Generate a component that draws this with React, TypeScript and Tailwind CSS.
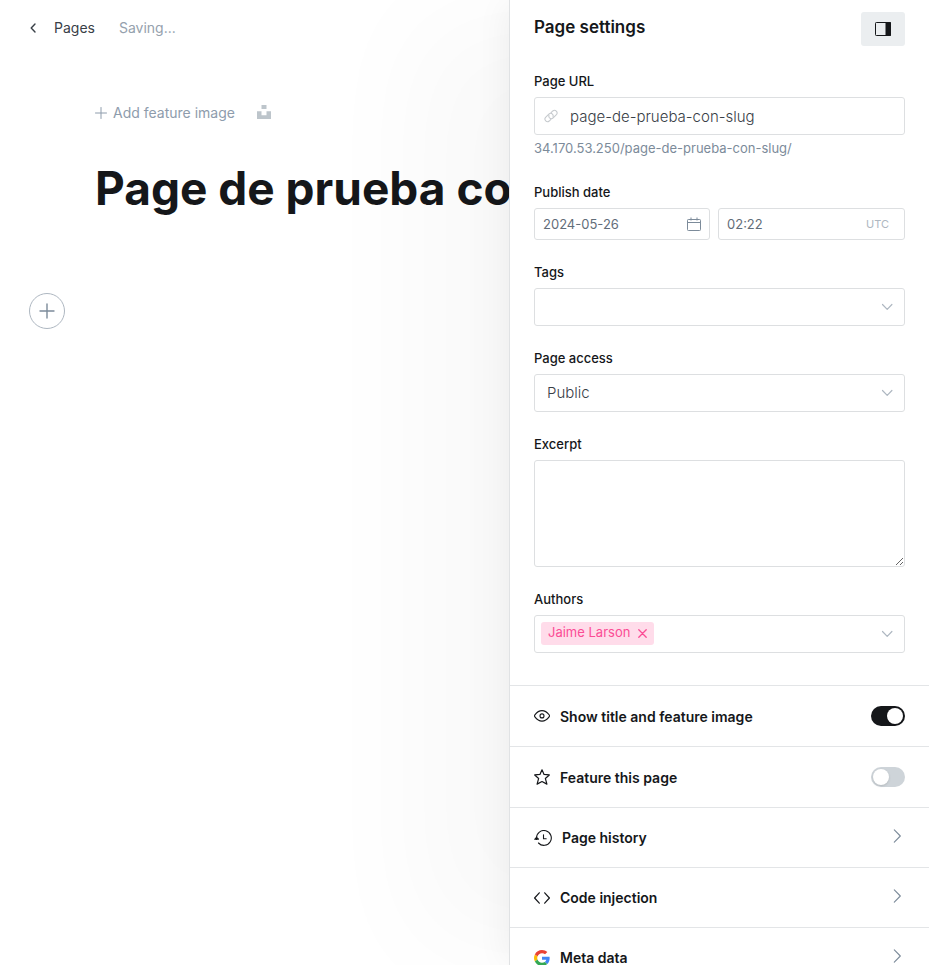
import { useState, type ReactNode } from "react";

const stroke = {
  fill: "none",
  stroke: "currentColor",
  strokeLinecap: "round",
  strokeLinejoin: "round",
} as const;

function ChevronDown() {
  return (
    <svg {...stroke} viewBox="0 0 12 8" className="pointer-events-none h-2 w-3 shrink-0 text-[#aeb7c1]" strokeWidth="1.2" aria-hidden="true">
      <path d="m1.500 1.500 4.700 4.900 4.700-4.900" />
    </svg>
  );
}

function ChevronRight() {
  return (
    <svg {...stroke} viewBox="0 0 8 14" className="mr-1 mb-1 h-3.5 w-2 text-[#7c8b9a]" strokeWidth="1.1" aria-hidden="true">
      <path d="M1.300.8 7.300 7l-6 6.200" />
    </svg>
  );
}

function LinkIcon() {
  return (
    <svg {...stroke} viewBox="0 0 24 24" className="size-3.5 shrink-0 text-[#c5c9cd]" strokeWidth="1.8" aria-hidden="true">
      <path d="M8.600 10.400a4.600 4.600 0 0 0 .9 4.800 4.400 4.400 0 0 0 6.200 0l5.600-5.600a4.400 4.400 0 0 0-6.200-6.200l-2.900 2.900" />
      <path d="M15.400 13.600a4.600 4.600 0 0 0-.9-4.800 4.400 4.400 0 0 0-6.200 0l-5.600 5.600a4.400 4.400 0 0 0 6.200 6.200l2.900-2.900" />
    </svg>
  );
}

function CalendarIcon() {
  return (
    <svg viewBox="0 0 14 14" className="size-3.5 shrink-0" fill="none" stroke="#7c8b9a" aria-hidden="true">
      <rect x=".5" y="2.5" width="13" height="11" rx=".8" />
      <path d="M.5 5.5h13M4 .5v3M10 .5v3" />
    </svg>
  );
}

function EyeIcon() {
  return (
    <svg {...stroke} viewBox="0 0 16 16" className="size-4" strokeWidth="1.1" aria-hidden="true">
      <path d="M8 2.600c-3 0-5.600 2.200-7.100 4.200a1.800 1.800 0 0 0 0 2.100C2.400 10.900 5 13.100 8 13.100s5.600-2.200 7.100-4.200a1.800 1.800 0 0 0 0-2.100C13.600 4.800 11 2.600 8 2.600Z" />
      <circle cx="8" cy="7.900" r="2" />
    </svg>
  );
}

function StarIcon() {
  return (
    <svg {...stroke} viewBox="0 0 16 16" className="size-4" strokeWidth="1.2" aria-hidden="true">
      <path d="m8 .8 2.050 4.650 5.250.5-3.950 3.500 1.550 5.650L8 12.500 3.100 15.100l1.550-5.650L.7 5.950l5.250-.5Z" />
    </svg>
  );
}

function HistoryIcon() {
  return (
    <svg {...stroke} viewBox="0 0 18 16" className="h-4 w-4.5" strokeWidth="1.1" aria-hidden="true">
      <path d="M2.500 9.500V8a7.400 7.400 0 1 1 2 5M9.500 4.700v4.100h2.700" />
      <path d="M.7 9.300 2.500 7.300l2 1.800Z" fill="currentColor" />
    </svg>
  );
}

function CodeIcon() {
  return (
    <svg {...stroke} viewBox="0 0 16 16" className="size-4" strokeWidth="1.2" aria-hidden="true">
      <path d="M5.300 2.800.600 8l4.700 5.200M10.700 2.800 15.400 8l-4.700 5.200" />
    </svg>
  );
}

function GoogleIcon() {
  return (
    <svg viewBox="0 0 48 48" className="size-4" aria-hidden="true">
      <path fill="#EA4335" d="M24 9.500c3.540 0 6.710 1.220 9.210 3.600l6.850-6.850C35.900 2.380 30.470 0 24 0 14.620 0 6.510 5.380 2.560 13.220l7.980 6.190C12.430 13.720 17.740 9.500 24 9.500z" />
      <path fill="#4285F4" d="M46.980 24.550c0-1.570-.15-3.090-.38-4.550H24v9.020h12.940c-.58 2.960-2.260 5.480-4.780 7.180l7.730 6c4.510-4.180 7.090-10.360 7.090-17.650z" />
      <path fill="#FBBC05" d="M10.530 28.590A14.500 14.500 0 0 1 9.770 24c0-1.600.27-3.140.76-4.590l-7.980-6.190A23.900 23.900 0 0 0 0 24c0 3.870.92 7.530 2.560 10.780z" />
      <path fill="#34A853" d="M24 48c6.480 0 11.930-2.130 15.890-5.810l-7.730-6c-2.150 1.450-4.920 2.300-8.160 2.300-6.260 0-11.570-4.220-13.470-9.910l-7.980 6.190C6.510 42.620 14.620 48 24 48z" />
    </svg>
  );
}

function Label({ htmlFor, children }: { htmlFor: string; children: ReactNode }) {
  return (
    <label htmlFor={htmlFor} className="mb-2 block text-[13px] leading-4 font-medium text-[#15171a]">
      {children}
    </label>
  );
}

const box = "flex items-center rounded-[3px] border border-[#dddfe1] bg-white";

function ToggleRow({ id, icon, label, initial }: { id: string; icon: ReactNode; label: string; initial: boolean }) {
  const [on, setOn] = useState(initial);
  return (
    <div className="flex h-[61px] items-center border-t border-[#e3e5e7] px-6">
      {icon}
      <label htmlFor={id} className="ml-2.5 flex-1 pt-0.5 text-sm leading-5 font-semibold">
        {label}
      </label>
      <input
        id={id}
        type="checkbox"
        checked={on}
        onChange={(e) => setOn(e.target.checked)}
        className="h-5 w-[34px] cursor-pointer appearance-none rounded-full bg-[#ced4d9] p-0.5 before:block before:size-4 before:rounded-full before:bg-white before:shadow-sm checked:bg-[#15171a] checked:before:ml-3.5"
      />
    </div>
  );
}

function LinkRow({ icon, label }: { icon: ReactNode; label: string }) {
  return (
    <button type="button" className="flex h-[60px] w-full items-center border-t border-[#e3e5e7] px-6 text-left">
      {icon}
      <span className="ml-2.5 flex-1 text-sm leading-5 font-semibold">{label}</span>
      <ChevronRight />
    </button>
  );
}

function Editor() {
  return (
    <main className="min-w-0 flex-1 overflow-hidden">
      <header className="flex h-14 items-center pl-[30px] text-sm">
        <a href="#pages" className="flex items-center gap-[17px] text-[#394047]">
          <svg {...stroke} viewBox="0 0 7 10" className="h-2.5 w-[7px]" strokeWidth="1.4" aria-hidden="true">
            <path d="M5 1 1.200 5 5 9" />
          </svg>
          Pages
        </a>
        <span className="ml-6 text-[#95a1ad]">Saving...</span>
      </header>
      <div className="mt-[47px] flex h-5 items-center pl-[95px]">
        <button type="button" className="flex items-center gap-1.5 text-sm text-[#8e9cac]">
          <svg {...stroke} viewBox="0 0 12 12" className="size-3" aria-hidden="true">
            <path d="M6 .5v11M.5 6h11" />
          </svg>
          Add feature image
        </button>
        <button type="button" aria-label="Choose from Unsplash" className="ml-[22px] pb-0.5 text-[#bdc5cb]">
          <svg viewBox="0 0 14 14" className="size-3.5" fill="currentColor" aria-hidden="true">
            <path d="M4.500 0h5v4h-5zM0 6.200h4.500v4h5v-4H14V14H0z" />
          </svg>
        </button>
      </div>
      <h1 className="mt-9 pl-[95px] text-[46px] leading-[58px] font-bold whitespace-nowrap text-[#15171a]">
        Page de prueba con
      </h1>
      <button
        type="button"
        aria-label="Add a card"
        className="mt-[76px] ml-[29px] flex size-9 items-center justify-center rounded-full border border-[#aeb7c1] text-[#7c8b9a]"
      >
        <svg {...stroke} viewBox="0 0 16 16" className="size-4" strokeWidth="1.400" aria-hidden="true">
          <path d="M8 1v14M1 8h14" />
        </svg>
      </button>
    </main>
  );
}

function SettingsPanel() {
  return (
    <aside className="relative w-[420px] shrink-0 overflow-y-auto border-l border-[#e0e2e4] bg-white shadow-[-8px_0_30px_-4px_rgba(0,0,0,0.05),-115px_0_110px_-20px_rgba(0,0,0,0.026)] [scrollbar-width:none]">
      <div className="px-6 pt-3 pb-8">
        <div className="flex h-[34px] items-center justify-between">
          <h2 className="pb-1 text-[17px] leading-6 font-semibold">Page settings</h2>
          <button type="button" aria-label="Toggle settings" className="flex h-[34px] w-11 items-center justify-center rounded-[3px] bg-[#ebeef0]">
            <svg viewBox="0 0 16 14" className="h-3.5 w-4" aria-hidden="true">
              <rect x=".5" y=".5" width="15" height="13" rx=".8" fill="none" stroke="#15171a" />
              <path d="M10.500 0h4.700a.8.8 0 0 1 .8.8v12.400a.8.8 0 0 1-.8.8h-4.700z" fill="#15171a" />
            </svg>
          </button>
        </div>

        <form className="mt-[27px] flex flex-col gap-6" onSubmit={(e) => e.preventDefault()}>
          <div>
            <Label htmlFor="url">Page URL</Label>
            <div className={`${box} h-[38px] gap-3 px-[9px]`}>
              <LinkIcon />
              <input id="url" defaultValue="page-de-prueba-con-slug" className="min-w-0 flex-1 pt-0.5 text-[15px] font-light text-[#394047] outline-none" />
            </div>
            <p className="mt-1 mb-0.5 text-[13px] leading-[19px] text-[#7c8b9a]">34.170.53.250/page-de-prueba-con-slug/</p>
          </div>

          <div>
            <Label htmlFor="date">Publish date</Label>
            <div className="flex gap-2">
              <div className={`${box} h-8 w-44 px-2`}>
                <input id="date" defaultValue="2024-05-26" className="min-w-0 flex-1 pt-px text-[13px] text-[#626d79] outline-none" />
                <CalendarIcon />
              </div>
              <div className={`${box} h-8 min-w-0 flex-1 pr-[15px] pl-2`}>
                <input aria-label="Publish time" defaultValue="02:22" className="min-w-0 flex-1 pt-px text-[13px] text-[#626d79] outline-none" />
                <span className="text-[11px] text-[#aeb7c1]">UTC</span>
              </div>
            </div>
          </div>

          <div>
            <Label htmlFor="tags">Tags</Label>
            <div className={`${box} h-[38px] pr-[11px] pl-3`}>
              <input id="tags" role="combobox" aria-expanded="false" className="min-w-0 flex-1 text-[15px] font-light outline-none" />
              <ChevronDown />
            </div>
          </div>

          <div>
            <Label htmlFor="access">Page access</Label>
            <div className={`${box} h-[38px] pr-[11px] pl-3`}>
              <select id="access" className="min-w-0 flex-1 appearance-none text-[15px] font-light text-[#394047] outline-none">
                <option>Public</option>
                <option>Members only</option>
                <option>Paid-members only</option>
              </select>
              <ChevronDown />
            </div>
          </div>

          <div>
            <Label htmlFor="excerpt">Excerpt</Label>
            <textarea id="excerpt" className="block h-[107px] w-full resize-y rounded-[3px] border border-[#dddfe1] px-3 py-2 text-[15px] font-light outline-none" />
          </div>

          <div>
            <Label htmlFor="authors">Authors</Label>
            <div className={`${box} h-[38px] pr-[11px] pl-1.5`}>
              <span className="mb-0.5 flex h-[23px] items-center gap-2 rounded-[3px] bg-[#ffdcea] px-[7px] pb-px text-[13px] text-[#fb4c95]">
                Jaime Larson
                <button type="button" aria-label="Remove Jaime Larson">
                  <svg {...stroke} viewBox="0 0 9 9" className="mt-0.5 size-[9px]" strokeWidth="1.300" aria-hidden="true">
                    <path d="m.8.8 7.400 7.400M8.200.8.800 8.200" />
                  </svg>
                </button>
              </span>
              <input id="authors" className="min-w-0 flex-1 text-[13px] outline-none" />
              <ChevronDown />
            </div>
          </div>
        </form>
      </div>

      <ToggleRow id="show-title" icon={<EyeIcon />} label="Show title and feature image" initial />
      <ToggleRow id="featured" icon={<StarIcon />} label="Feature this page" initial={false} />
      <LinkRow icon={<HistoryIcon />} label="Page history" />
      <LinkRow icon={<CodeIcon />} label="Code injection" />
      <LinkRow icon={<GoogleIcon />} label="Meta data" />
    </aside>
  );
}

export default function App() {
  return (
    <div className="flex h-screen overflow-hidden bg-white font-['Inter',sans-serif] text-[#15171a]">
      <Editor />
      <SettingsPanel />
    </div>
  );
}
